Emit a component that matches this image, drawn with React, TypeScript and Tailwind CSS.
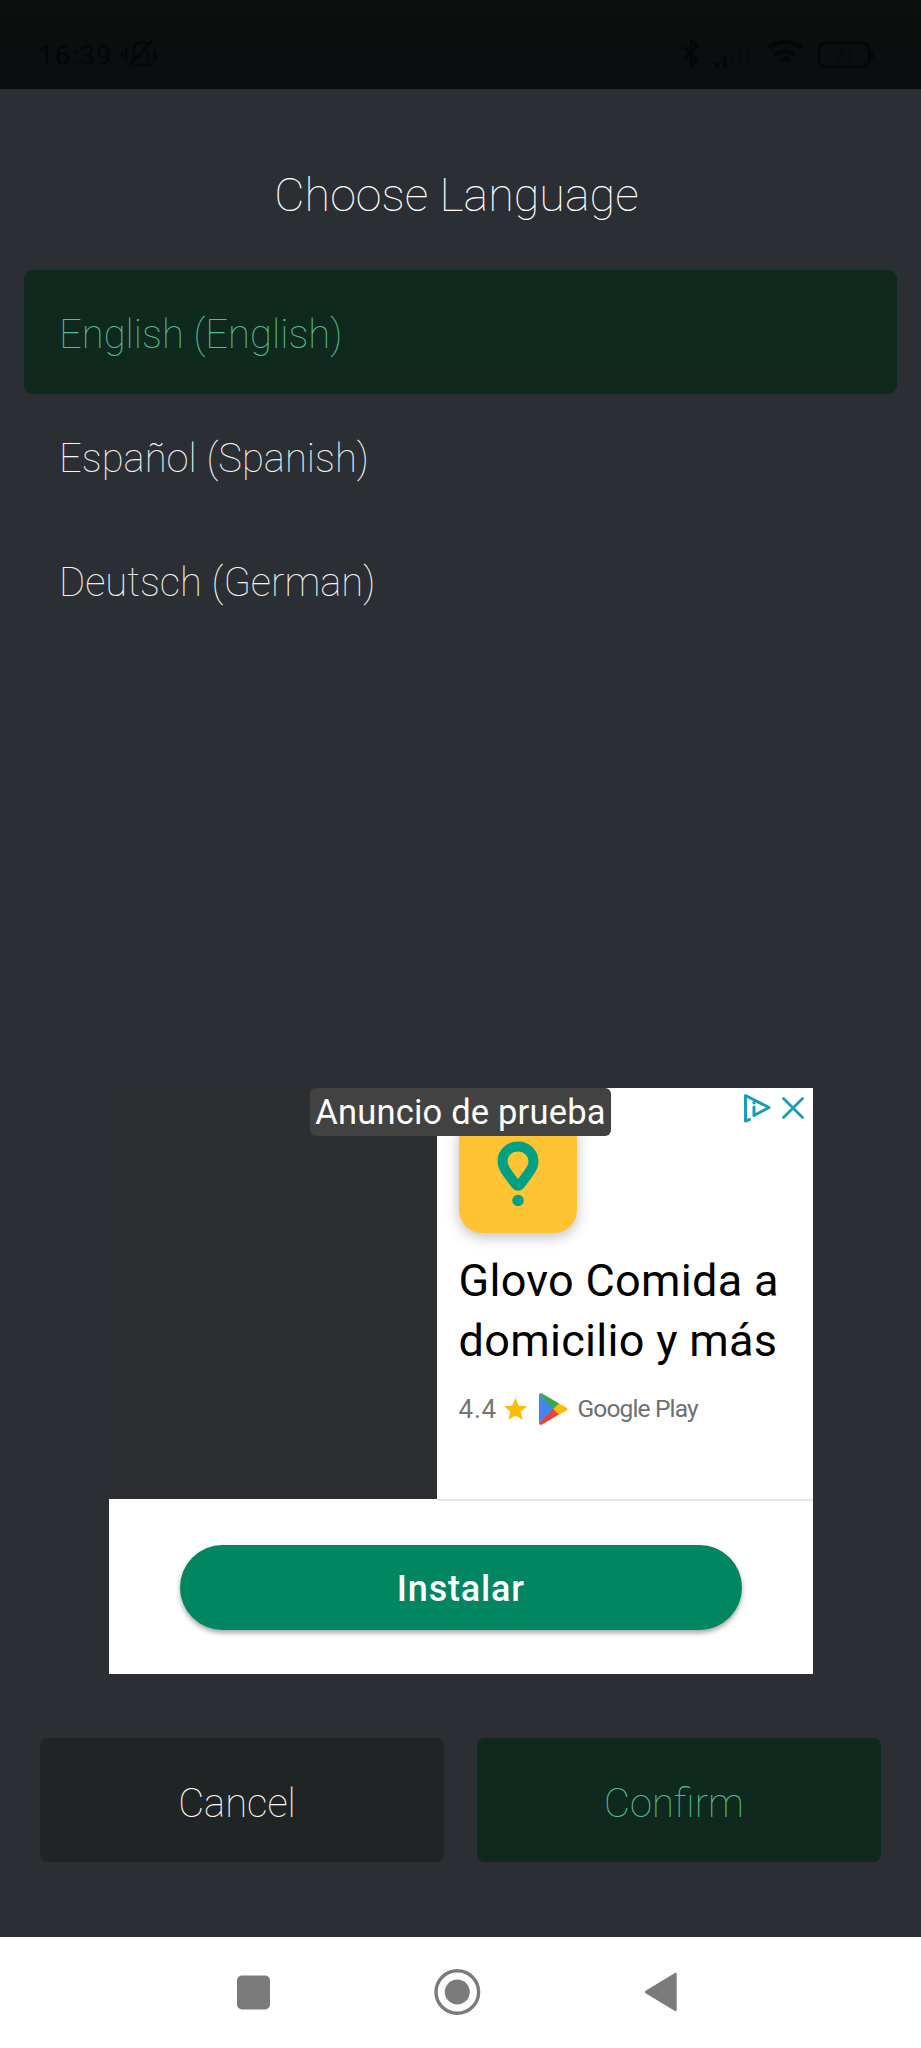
const languages = [
  { label: 'English (English)', selected: true },
  { label: 'Español (Spanish)', selected: false },
  { label: 'Deutsch (German)', selected: false },
];

function StatusBar() {
  return (
    <header className="flex h-[89px] items-start bg-linear-to-b from-[#0c0f0d] to-[#0a0c0f] px-[38px] pt-[38px] text-[#050607]">
      <span className="text-[28px] leading-[36px] tracking-[1px]">16:39</span>
      <svg className="mt-px ml-[7px] h-[30px] w-[38px]" viewBox="0 0 38 30" fill="none" stroke="currentColor" strokeWidth="2.600">
        <path d="M15 26h16M14 21V11c0-5 3-8 8-8 3 0 5 1 6 3M28 12v13M10 26 32 2M2 12v6M6 9v12M35 11v10" />
      </svg>
      <div className="ml-auto flex items-start gap-[13px] pr-[9px]">
        <svg className="h-[30px] w-[20px]" viewBox="0 0 20 30" fill="none" stroke="currentColor" strokeWidth="3">
          <path d="m3 9 13 12-6 6V3l6 6L3 21" />
        </svg>
        <svg className="h-[30px] w-[40px]" viewBox="0 0 40 30" fill="currentColor">
          <path d="M1 24h4v6H1zM9 19h4v11H9z" />
          <path className="opacity-20" d="M17 14h4v16h-4zM25 9h4v21h-4zM33 4h4v26h-4z" />
        </svg>
        <svg className="h-[30px] w-[36px]" viewBox="0 0 36 30" fill="none" stroke="currentColor" strokeWidth="4">
          <path d="M2 10c9-8 23-8 32 0M8 17c6-5 14-5 20 0M13 23c3-3 7-3 10 0" />
        </svg>
        <svg className="ml-[1px] h-[30px] w-[57px]" viewBox="0 0 57 30" fill="none" stroke="currentColor" strokeWidth="2.400">
          <rect x="2" y="5" width="50" height="24" rx="6" />
          <path d="M55 13v8" />
          <text x="27" y="24" textAnchor="middle" fontSize="18" fill="currentColor" stroke="none" opacity="0.4">71</text>
        </svg>
      </div>
    </header>
  );
}

function AppIcon() {
  return (
    <div className="flex h-[118px] w-[118px] items-start justify-center rounded-[23px] bg-[#ffc333] pt-[26px] shadow-[0_4px_14px_rgba(0,0,0,0.25)]">
      <svg className="h-[66px] w-[42px]" viewBox="0 0 42 66">
        <path d="M21 5.500c-9 0-15.500 6.500-15.500 15 0 5 2.500 8.500 5.500 12.500l8 10.700c1.200 1.500 2.800 1.500 4 0l8-10.700c3-4 5.500-7.500 5.500-12.500 0-8.500-6.500-15-15.500-15Z" fill="none" stroke="#00a082" strokeWidth="10" strokeLinejoin="round" />
        <circle cx="21" cy="59.500" r="5.700" fill="#00a082" />
      </svg>
    </div>
  );
}

function AdChoices() {
  return (
    <div className="flex items-center gap-[11px] text-[#1a9dba]">
      <svg className="h-[30px] w-[28px]" viewBox="0 0 28 30" fill="none" stroke="currentColor" strokeWidth="3" strokeLinejoin="round" strokeLinecap="round">
        <path d="M6.500 26.500 2.500 28V2.500L26 14.500 11 22.500V14" />
        <path d="M11 9.500v.3" strokeWidth="3.200" />
      </svg>
      <svg className="h-[24px] w-[22px]" viewBox="0 0 22 24" fill="none" stroke="currentColor" strokeWidth="2.800" strokeLinecap="round">
        <path d="m1.500 2.500 19 19m0-19-19 19" />
      </svg>
    </div>
  );
}

function AdCard() {
  return (
    <section className="relative ml-[109px] h-[586px] w-[703.5px] text-black">
      <div className="flex h-[411px]">
        <div className="w-[328px] bg-[#2d2e32]" />
        <div className="flex flex-1 flex-col bg-white pl-[21.5px]">
          <div className="mt-[27px]"><AppIcon /></div>
          <h2 className="mt-[18px] text-[45px] leading-[60px] tracking-[0.3px] whitespace-nowrap">Glovo Comida a<br />domicilio y más</h2>
          <div className="mt-[17px] flex items-center text-[#757575]">
            <span className="w-[38px] pt-[2px] text-[26px] tracking-[0.8px]">4.4</span>
            <svg className="ml-[7px] h-[22px] w-[23px]" viewBox="0 0 24 23" fill="#fbbc04">
              <path d="m12 0 3.500 8 8.500.7-6.500 5.600 2 8.400L12 18.300l-7.500 4.400 2-8.400L0 8.700 8.500 8Z" />
            </svg>
            <svg className="ml-[11px] h-[32px] w-[30px]" viewBox="0 0 30 32">
              <path d="M1 1.500v29L16 16Z" fill="#4285f4" />
              <path d="M1 1.500C1.500 0 3 0 4.500.800L21.500 10.800 15.500 16.500Z" fill="#34a853" />
              <path d="M1 30.500c.5 1.500 2 1.500 3.500.700l17-10-6-5.700Z" fill="#ea4335" />
              <path d="m21 10.500 7.500 4.200c1.500.900 1.500 1.900 0 2.800L21 21.700 15.300 16Z" fill="#fbbc04" />
            </svg>
            <span className="ml-[10px] pt-[2px] text-[24.5px] font-[450] tracking-[-0.85px] text-[#6c6f73]">Google Play</span>
          </div>
        </div>
      </div>
      <div className="flex h-[175px] items-start bg-white px-[71px] pt-[46px]">
        <button className="h-[85px] w-full rounded-full bg-[#008661] pt-[3px] text-[36px] font-medium tracking-[0.8px] text-white shadow-[0_3px_5px_rgba(0,0,0,0.35)]">Instalar</button>
      </div>
      <div className="absolute top-[411px] right-0 left-[328px] h-[2px] bg-[#e4e5e6]" />
      <div className="absolute top-0 left-[201px] flex h-[48px] w-[301px] items-center justify-center rounded-[6px] bg-[#424242] pt-[2px] text-[34.5px] tracking-[0.2px] whitespace-nowrap text-white">Anuncio de prueba</div>
      <div className="absolute top-[5px] right-[9px]"><AdChoices /></div>
    </section>
  );
}

function NavigationBar() {
  return (
    <nav className="flex h-[111px] items-start bg-white pt-[32px] pl-[236px] text-[#7b7b7b]">
      <svg className="h-[46px] w-[36px]" viewBox="0 0 36 46" fill="currentColor"><rect x="1" y="6.500" width="33" height="34" rx="5" /></svg>
      <svg className="ml-[162px] h-[46px] w-[47px]" viewBox="0 0 47 46" fill="none" stroke="currentColor">
        <circle cx="23.300" cy="23" r="21.300" strokeWidth="3.400" />
        <circle cx="23.300" cy="23" r="12.500" fill="currentColor" stroke="none" />
      </svg>
      <svg className="ml-[163px] h-[46px] w-[34px]" viewBox="0 0 34 46" fill="currentColor"><path d="M2 21.500 30.500 4.200c1.200-.7 2.200-.3 2.200 1v35.600c0 1.300-1 1.700-2.200 1L2 24.500c-1.400-.9-1.400-2.100 0-3Z" /></svg>
    </nav>
  );
}

export default function App() {
  return (
    <div className="flex h-[2048px] w-[921px] flex-col overflow-hidden bg-[#2b2e33] font-['Roboto',sans-serif]">
      <StatusBar />
      <main className="flex h-[1848px] flex-col">
        <h1 className="mt-[74px] h-[64px] pr-[8px] text-center text-[46.7px] leading-[64px] font-[150] text-white">Choose Language</h1>
        <ul className="mt-[42.5px] flex flex-col px-[24px]">
          {languages.map(({ label, selected }) => (
            <li key={label} className={`flex h-[124px] items-center rounded-[9px] pt-[7px] pl-[35px] text-[40px] font-[150] ${selected ? 'bg-[#0f291e] text-[#55bd90]' : 'text-[#f4f4f4]'}`}>{label}</li>
          ))}
        </ul>
        <div className="mt-[446.5px]"><AdCard /></div>
        <div className="mt-[64px] flex gap-[33px] px-[40px]">
          <button className="h-[124px] flex-1 rounded-[8px] bg-[#212425] pt-[7px] pr-[10px] text-[40px] font-[150] text-white">Cancel</button>
          <button className="h-[124px] flex-1 rounded-[8px] bg-[#0f291e] pt-[7px] pr-[10px] text-[40px] font-[150] text-[#55bd90]">Confirm</button>
        </div>
      </main>
      <NavigationBar />
    </div>
  );
}
